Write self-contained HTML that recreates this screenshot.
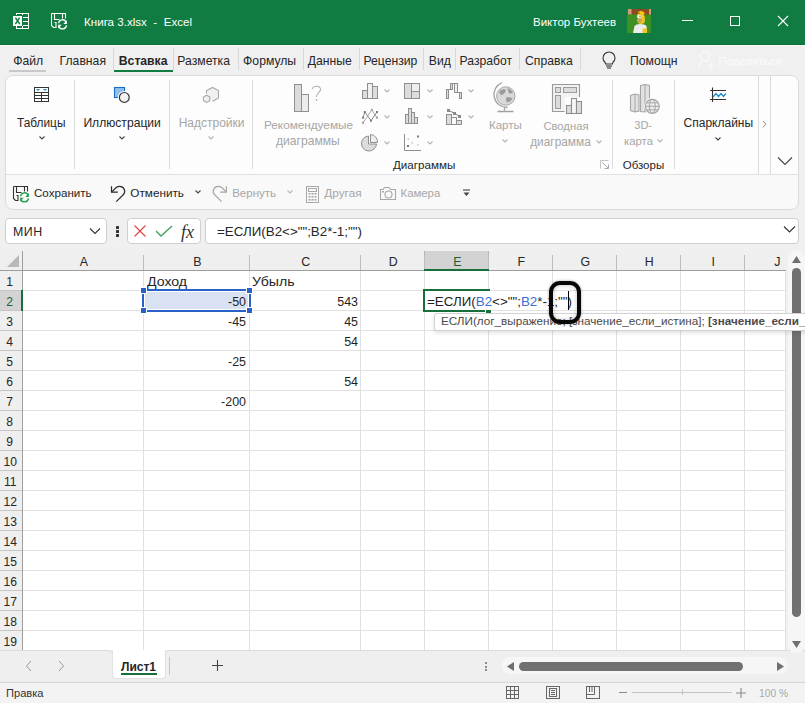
<!DOCTYPE html>
<html><head><meta charset="utf-8"><style>
html,body{margin:0;padding:0;}
body{width:805px;height:703px;overflow:hidden;position:relative;background:#f0f0f0;font-family:"Liberation Sans", sans-serif;}
.t{position:absolute;white-space:nowrap;}
.r{position:absolute;box-sizing:border-box;}
.s{position:absolute;overflow:visible;}
</style></head><body>
<div class="r" style="left:0px;top:0px;width:805px;height:44px;background:#107c41;"></div>
<svg class="s" style="left:12px;top:12px;" width="18" height="18" viewBox="0 0 18 18"><rect x="4" y="1" width="13" height="16" fill="#fff"/>
<g fill="#107c41"><rect x="5" y="2" width="5" height="2"/><rect x="11" y="2" width="5" height="3"/><rect x="11" y="6" width="5" height="3"/><rect x="11" y="10" width="5" height="3"/><rect x="11" y="14" width="5" height="2"/><rect x="5" y="14" width="5" height="2"/>
<rect x="0" y="3" width="11" height="11"/></g>
<rect x="1" y="4" width="9" height="10" fill="#fff"/>
<path d="M3.4 5.6 L7.8 12.2 M7.6 5.6 L3.4 12.2" stroke="#107c41" stroke-width="1.5"/></svg>
<svg class="s" style="left:50px;top:12px;" width="20" height="20" viewBox="0 0 20 20"><path d="M1.5 1.5 H15.5 V6.5 M1.5 1.5 V13.5 L3.5 15.5 H6.5 M4.5 1.5 V7.5 H9.5 M12.5 1.5 V6.5 M4.5 10.5 H6 V15.5" fill="none" stroke="#fff" stroke-width="1.1"/>
<path d="M8.5 11.3 A4 4 0 0 1 16.2 10.3" fill="none" stroke="#fff" stroke-width="1.3"/>
<path d="M13.3 11.9 L16.9 11.9 L16.9 8.2 Z" fill="#fff"/>
<path d="M16.5 13.4 A4 4 0 0 1 8.8 14.4" fill="none" stroke="#fff" stroke-width="1.3"/>
<path d="M11.7 12.8 L8.1 12.8 L8.1 16.6 Z" fill="#fff"/></svg>
<div class="t" style="left:84.00px;top:12px;font-size:11.6px;line-height:20px;color:#ffffff;">Книга 3.xlsx&nbsp; -&nbsp; Excel</div>
<div class="t" style="left:533.00px;top:12px;font-size:11.5px;line-height:20px;color:#ffffff;">Виктор Бухтеев</div>
<svg class="s" style="left:627px;top:9px;" width="24" height="24" viewBox="0 0 24 24"><rect width="24" height="24" fill="#3d9122"/>
<rect width="24" height="5.5" fill="#8b4c24"/>
<rect x="1" y="0" width="3.5" height="5.5" fill="#c9a079"/>
<rect x="22" y="0" width="2" height="5.5" fill="#c9a079"/>
<path d="M10.5 4 Q11 1.5 14.5 2 Q18 2.5 17.8 6 V13 Q17 15 14 15 Q11 15 10.5 13 Z" fill="#f4c614"/>
<ellipse cx="12.3" cy="7.3" rx="2.4" ry="1.6" fill="#f4f4f4"/>
<circle cx="13" cy="7.2" r="0.6" fill="#333"/>
<ellipse cx="12.8" cy="11.5" rx="2.4" ry="2.4" fill="#c9a46a"/>
<path d="M6 24 L7.5 17 Q9 15 13 15 Q18 15 19.5 17 L20 24 Z" fill="#ececec"/>
<rect x="15.6" y="19.5" width="4.3" height="4.5" fill="#f4c614"/>
<path d="M10 4.5 Q12 3 13 4.5 M17 5 Q17.5 6 17.8 7" stroke="#3a2a10" stroke-width="0.6" fill="none"/></svg>
<div class="r" style="left:682px;top:20px;width:11px;height:1px;background:#fff;"></div>
<div class="r" style="left:730px;top:16px;width:10px;height:10px;border:1px solid #fff;"></div>
<svg class="s" style="left:777px;top:15px;" width="12" height="12" viewBox="0 0 12 12"><path d="M1 1 L11 11 M11 1 L1 11" stroke="#fff" stroke-width="1.1"/></svg>
<div class="r" style="left:0px;top:44px;width:805px;height:31px;background:#f0f0f0;"></div>
<div class="r" style="left:0px;top:44px;width:805px;height:1px;background:#0c7039;"></div>
<div class="r" style="left:0px;top:45px;width:805px;height:1px;background:#f9f9f9;"></div>
<div class="t" style="left:13.20px;top:51px;font-size:12.2px;line-height:20px;color:#262626;">Файл</div>
<div class="t" style="left:59.60px;top:51px;font-size:12.2px;line-height:20px;color:#262626;">Главная</div>
<div class="t" style="left:118.80px;top:51px;font-size:12.2px;line-height:20px;color:#262626;font-weight:bold;">Вставка</div>
<div class="t" style="left:177.30px;top:51px;font-size:12.2px;line-height:20px;color:#262626;">Разметка</div>
<div class="t" style="left:243.10px;top:51px;font-size:12.2px;line-height:20px;color:#262626;">Формулы</div>
<div class="t" style="left:307.70px;top:51px;font-size:12.2px;line-height:20px;color:#262626;">Данные</div>
<div class="t" style="left:363.50px;top:51px;font-size:12.2px;line-height:20px;color:#262626;">Рецензир</div>
<div class="t" style="left:428.80px;top:51px;font-size:12.2px;line-height:20px;color:#262626;">Вид</div>
<div class="t" style="left:459.60px;top:51px;font-size:12.2px;line-height:20px;color:#262626;">Разработ</div>
<div class="t" style="left:525.00px;top:51px;font-size:12.2px;line-height:20px;color:#262626;">Справка</div>
<div class="r" style="left:113px;top:48px;width:1px;height:22px;background:#d8d8d8;"></div>
<div class="r" style="left:173px;top:48px;width:1px;height:22px;background:#d8d8d8;"></div>
<div class="r" style="left:238px;top:48px;width:1px;height:22px;background:#d8d8d8;"></div>
<div class="r" style="left:303px;top:48px;width:1px;height:22px;background:#d8d8d8;"></div>
<div class="r" style="left:359px;top:48px;width:1px;height:22px;background:#d8d8d8;"></div>
<div class="r" style="left:423px;top:48px;width:1px;height:22px;background:#d8d8d8;"></div>
<div class="r" style="left:455px;top:48px;width:1px;height:22px;background:#d8d8d8;"></div>
<div class="r" style="left:519px;top:48px;width:1px;height:22px;background:#d8d8d8;"></div>
<div class="r" style="left:580px;top:48px;width:1px;height:22px;background:#d8d8d8;"></div>
<div class="r" style="left:9px;top:70px;width:37px;height:2px;background:#c8c8c8;"></div>
<div class="r" style="left:114px;top:70px;width:59px;height:2px;background:#107c41;"></div>
<svg class="s" style="left:601px;top:51px;" width="16" height="18" viewBox="0 0 16 18"><path d="M4.2 11.5 C2.5 10 2 8.5 2 7 A6 6 0 0 1 14 7 C14 8.5 13.5 10 11.8 11.5 L11.5 13 H4.5 Z" fill="none" stroke="#333" stroke-width="1.1"/>
<line x1="5" y1="15" x2="11" y2="15" stroke="#333" stroke-width="1.1"/><line x1="6" y1="17" x2="10" y2="17" stroke="#333" stroke-width="1.1"/></svg>
<div class="t" style="left:630.00px;top:51px;font-size:12.2px;line-height:20px;color:#262626;width:48px;overflow:hidden;">Помощн</div>
<svg class="s" style="left:697px;top:50px;" width="20" height="20" viewBox="0 0 20 20"><circle cx="8" cy="6" r="4.5" fill="none" stroke="#fafafa" stroke-width="1.1"/>
<path d="M1.5 18 C2 12.5 5 11 8 11 C9.5 11 10.5 11.3 11.5 12" fill="none" stroke="#fafafa" stroke-width="1.1"/>
<path d="M14 12 V19 M10.5 15.5 H17.5" stroke="#fafafa" stroke-width="1.1"/></svg>
<div class="t" style="left:718.30px;top:51px;font-size:11.5px;line-height:20px;color:#fbfbfb;">Поделиться</div>
<div class="r" style="left:5px;top:75px;width:794px;height:135px;background:#f9f9f9;border:1px solid #dadada;border-radius:8px;"></div>
<div class="r" style="left:6px;top:76px;width:792px;height:98px;background:#fdfdfd;border-radius:7px 7px 0 0;"></div>
<div class="r" style="left:6px;top:174px;width:792px;height:1px;background:#e1e1e1;"></div>
<div class="r" style="left:74px;top:80px;width:1px;height:89px;background:#dcdcdc;"></div>
<div class="r" style="left:169px;top:80px;width:1px;height:89px;background:#dcdcdc;"></div>
<div class="r" style="left:252px;top:80px;width:1px;height:89px;background:#dcdcdc;"></div>
<div class="r" style="left:612px;top:80px;width:1px;height:89px;background:#dcdcdc;"></div>
<div class="r" style="left:674px;top:80px;width:1px;height:89px;background:#dcdcdc;"></div>
<div class="r" style="left:758px;top:76px;width:1px;height:98px;background:#dcdcdc;"></div>
<div class="r" style="left:770px;top:76px;width:1px;height:98px;background:#dcdcdc;"></div>
<svg class="s" style="left:34px;top:87px;" width="15" height="15" viewBox="0 0 15 15"><rect x="0.5" y="0.5" width="14" height="14" fill="#fff" stroke="#333"/>
<path d="M2 2 H6 L4 4 Z M9 2 H13 L11 4 Z" fill="#1e88d2"/>
<path d="M0.5 5.5 H14.5 M0.5 8.5 H14.5 M0.5 11.5 H14.5 M7.5 5.5 V14.5" stroke="#333"/></svg>
<div class="t" style="left:17.00px;top:113px;font-size:11.87px;line-height:20px;color:#262626;">Таблицы</div>
<svg class="s" style="left:38px;top:135px;" width="8" height="6" viewBox="0 0 8 6"><path d="M1.5 1.5 L4 4 L6.5 1.5" fill="none" stroke="#444" stroke-width="1.1"/></svg>
<svg class="s" style="left:113px;top:86px;" width="19" height="19" viewBox="0 0 19 19"><rect x="1.5" y="1.5" width="10" height="10" fill="#8fc0ec" stroke="#1a6fc4" stroke-width="1.1"/>
<circle cx="11.3" cy="11.4" r="6.4" fill="#fbfbfb"/>
<circle cx="11.3" cy="11.4" r="4.9" fill="#f4f4f4" stroke="#333" stroke-width="1.2"/></svg>
<div class="t" style="left:83.40px;top:113px;font-size:12.12px;line-height:20px;color:#262626;">Иллюстрации</div>
<svg class="s" style="left:118px;top:135px;" width="8" height="6" viewBox="0 0 8 6"><path d="M1.5 1.5 L4 4 L6.5 1.5" fill="none" stroke="#444" stroke-width="1.1"/></svg>
<svg class="s" style="left:198px;top:84px;" width="24" height="20" viewBox="0 0 24 20"><path d="M8.5 9.5 V6.6 L14.5 3.4 L20.5 6.6 V14 L14.5 17.2" fill="#f0f0f0" stroke="#a8a8a8" stroke-width="1.1"/>
<path d="M8.6 11.2 L11.8 13 V16.6 L8.6 18.4 L5.4 16.6 V13 Z" fill="#f0f0f0" stroke="#a8a8a8" stroke-width="1.1"/></svg>
<div class="t" style="left:178.70px;top:113px;font-size:12.0px;line-height:20px;color:#a6a6a6;">Надстройки</div>
<svg class="s" style="left:207px;top:135px;" width="8" height="6" viewBox="0 0 8 6"><path d="M1.5 1.5 L4 4 L6.5 1.5" fill="none" stroke="#b4b4b4" stroke-width="1.1"/></svg>
<svg class="s" style="left:293px;top:84px;" width="31" height="29" viewBox="0 0 31 29"><rect x="1.5" y="0.5" width="7" height="27" fill="#dcdcdc" stroke="#8f8f8f"/>
<rect x="8.5" y="10.5" width="7" height="17" fill="#ececec" stroke="#8f8f8f"/>
<path d="M19.5 5 C19.5 1.5 27.5 1 27.5 5.5 C27.5 8.5 23.5 9 23.5 12.5 L23.5 13" fill="none" stroke="#b0b0b0" stroke-width="1.1"/>
<circle cx="23.5" cy="16" r="0.9" fill="#b0b0b0"/></svg>
<div class="t" style="left:264.00px;top:115px;font-size:11.75px;line-height:20px;color:#a6a6a6;">Рекомендуемые</div>
<div class="t" style="left:276.00px;top:131px;font-size:12.12px;line-height:20px;color:#a6a6a6;">диаграммы</div>
<svg class="s" style="left:361px;top:82px;" width="18" height="17" viewBox="0 0 18 17"><rect x="1.5" y="8.5" width="5" height="8" fill="#dcdcdc" stroke="#8f8f8f"/><rect x="6.5" y="1.5" width="5" height="15" fill="#f0f0f0" stroke="#8f8f8f"/><rect x="11.5" y="4.5" width="5" height="12" fill="#dcdcdc" stroke="#8f8f8f"/></svg>
<svg class="s" style="left:403px;top:82px;" width="18" height="17" viewBox="0 0 18 17"><rect x="1.5" y="1.5" width="15" height="15" fill="#dcdcdc" stroke="#8f8f8f"/><rect x="8.5" y="1.5" width="8" height="8" fill="#eeeeee" stroke="#8f8f8f"/><path d="M8.5 9.5 V16.5" stroke="#8f8f8f"/></svg>
<svg class="s" style="left:445px;top:82px;" width="18" height="17" viewBox="0 0 18 17"><rect x="1.5" y="7.5" width="2" height="9" fill="#dcdcdc" stroke="#8f8f8f"/><rect x="5.5" y="1.5" width="2" height="6" fill="#dcdcdc" stroke="#8f8f8f"/><rect x="9.5" y="1.5" width="3" height="9" fill="#f0f0f0" stroke="#8f8f8f"/><rect x="14.5" y="10.5" width="2" height="6" fill="#dcdcdc" stroke="#8f8f8f"/><path d="M3.5 7.5 H5.5 M12.5 10.5 H14.5 M7.5 1.5 H9.5" stroke="#8f8f8f"/></svg>
<svg class="s" style="left:361px;top:108px;" width="18" height="17" viewBox="0 0 18 17"><path d="M2 14.8 L10.8 1.8 L16 9.7" fill="none" stroke="#a8a8a8" stroke-width="1"/><path d="M2 9.7 L3.8 4 L10 12.7 L16 4" fill="none" stroke="#8a8a8a" stroke-width="1"/><g fill="#7a7a7a"><rect x="1" y="8.7" width="2" height="2"/><rect x="2.8" y="3" width="2" height="2"/><rect x="9" y="11.7" width="2" height="2"/><rect x="15" y="3" width="2" height="2"/></g><g fill="#a0a0a0"><rect x="1" y="13.8" width="2" height="2"/><rect x="9.8" y="0.8" width="2" height="2"/><rect x="15" y="8.7" width="2" height="2"/></g></svg>
<svg class="s" style="left:404px;top:108px;" width="17" height="17" viewBox="0 0 17 17"><rect x="1.5" y="6.5" width="3" height="9" fill="#dcdcdc" stroke="#8f8f8f"/><rect x="4.5" y="0.5" width="3" height="15" fill="#dcdcdc" stroke="#8f8f8f"/><rect x="7.5" y="4.5" width="3" height="11" fill="#dcdcdc" stroke="#8f8f8f"/><rect x="10.5" y="9.5" width="3" height="6" fill="#dcdcdc" stroke="#8f8f8f"/></svg>
<svg class="s" style="left:445px;top:108px;" width="18" height="17" viewBox="0 0 18 17"><rect x="1.5" y="6.5" width="5" height="10" fill="#dcdcdc" stroke="#8f8f8f"/><rect x="6.5" y="9.5" width="5" height="7" fill="#f8f8f8" stroke="#8f8f8f"/><rect x="11.5" y="12.5" width="5" height="4" fill="#dcdcdc" stroke="#8f8f8f"/><path d="M3.4 2.3 L9.6 5.2 L14.3 8.4" stroke="#8f8f8f" stroke-width="1"/><g fill="#8a8a8a"><rect x="2" y="1" width="3" height="3"/><rect x="8" y="4" width="3" height="3"/><rect x="13" y="7" width="3" height="3"/></g></svg>
<svg class="s" style="left:361px;top:134px;" width="18" height="18" viewBox="0 0 18 18"><path d="M7.5 2 A7.5 7.5 0 1 0 15.5 10 H7.5 Z" fill="#dcdcdc" stroke="#8f8f8f"/><path d="M9.5 0.5 V8.5 H16.5 A7.5 7.5 0 0 0 9.5 0.5 Z" fill="#eeeeee" stroke="#8f8f8f"/></svg>
<svg class="s" style="left:404px;top:134px;" width="17" height="18" viewBox="0 0 17 18"><path d="M0.5 0 V16.5 H17" fill="none" stroke="#8f8f8f"/><g fill="#7a7a7a"><rect x="3" y="11" width="2" height="2"/><rect x="13" y="1.5" width="2" height="2"/></g><g fill="#c4c4c4"><rect x="7.5" y="8" width="1.5" height="1.5"/><rect x="3.5" y="4.5" width="1.5" height="1.5"/><rect x="13" y="10" width="1.5" height="1.5"/></g></svg>
<svg class="s" style="left:383px;top:88px;" width="8" height="6" viewBox="0 0 8 6"><path d="M1.5 1.5 L4 4 L6.5 1.5" fill="none" stroke="#b4b4b4" stroke-width="1.1"/></svg>
<svg class="s" style="left:425.5px;top:88px;" width="8" height="6" viewBox="0 0 8 6"><path d="M1.5 1.5 L4 4 L6.5 1.5" fill="none" stroke="#b4b4b4" stroke-width="1.1"/></svg>
<svg class="s" style="left:467px;top:88px;" width="8" height="6" viewBox="0 0 8 6"><path d="M1.5 1.5 L4 4 L6.5 1.5" fill="none" stroke="#b4b4b4" stroke-width="1.1"/></svg>
<svg class="s" style="left:383px;top:114px;" width="8" height="6" viewBox="0 0 8 6"><path d="M1.5 1.5 L4 4 L6.5 1.5" fill="none" stroke="#b4b4b4" stroke-width="1.1"/></svg>
<svg class="s" style="left:425.5px;top:114px;" width="8" height="6" viewBox="0 0 8 6"><path d="M1.5 1.5 L4 4 L6.5 1.5" fill="none" stroke="#b4b4b4" stroke-width="1.1"/></svg>
<svg class="s" style="left:467px;top:114px;" width="8" height="6" viewBox="0 0 8 6"><path d="M1.5 1.5 L4 4 L6.5 1.5" fill="none" stroke="#b4b4b4" stroke-width="1.1"/></svg>
<svg class="s" style="left:383px;top:140px;" width="8" height="6" viewBox="0 0 8 6"><path d="M1.5 1.5 L4 4 L6.5 1.5" fill="none" stroke="#b4b4b4" stroke-width="1.1"/></svg>
<svg class="s" style="left:425.5px;top:140px;" width="8" height="6" viewBox="0 0 8 6"><path d="M1.5 1.5 L4 4 L6.5 1.5" fill="none" stroke="#b4b4b4" stroke-width="1.1"/></svg>
<div class="t" style="left:393.00px;top:155px;font-size:11.62px;line-height:20px;color:#262626;">Диаграммы</div>
<svg class="s" style="left:489px;top:81px;" width="30" height="32" viewBox="0 0 30 32"><path d="M13 1.5 A13 13 0 0 0 18.5 26.5" fill="none" stroke="#a0a0a0" stroke-width="1.3"/>
<circle cx="16.8" cy="15" r="9.2" fill="#d9d9d9" stroke="#a8a8a8"/>
<path d="M10.5 10 Q14 7 17 9 Q16 13 12.5 14 Q9.5 12.5 10.5 10 Z M17 16.5 Q21 15.5 23.5 17.5 Q21 22 17.5 21 Z M18.5 7 Q22.5 8 24 12 L20 12.5 Z" fill="#9a9a9a"/>
<path d="M15.5 26.5 V29.5 M8.5 30.5 H24.5" stroke="#a0a0a0" stroke-width="1.3"/></svg>
<div class="t" style="left:489.00px;top:115px;font-size:11.5px;line-height:20px;color:#a6a6a6;">Карты</div>
<svg class="s" style="left:501px;top:137.5px;" width="8" height="6" viewBox="0 0 8 6"><path d="M1.5 1.5 L4 4 L6.5 1.5" fill="none" stroke="#b4b4b4" stroke-width="1.1"/></svg>
<svg class="s" style="left:551px;top:83px;" width="32" height="32" viewBox="0 0 32 32"><rect x="1.5" y="1.5" width="27" height="27" fill="#f2f2f2"/>
<path d="M13.5 28.5 H1.5 V1.5 H28.5 V16.5" fill="none" stroke="#999" stroke-width="1.1"/>
<rect x="4.5" y="4.5" width="5" height="5" fill="#dcdcdc" stroke="#9c9c9c"/>
<rect x="12.5" y="4.5" width="13" height="5" fill="#dcdcdc" stroke="#9c9c9c"/>
<rect x="4.5" y="12.5" width="5" height="13" fill="#dcdcdc" stroke="#9c9c9c"/>
<rect x="14" y="14" width="18" height="18" fill="#fdfdfd"/>
<rect x="15.5" y="22.5" width="5" height="8" fill="#dcdcdc" stroke="#8f8f8f" stroke-width="1.1"/>
<rect x="20.5" y="15.5" width="5" height="15" fill="#f6f6f6" stroke="#8f8f8f" stroke-width="1.1"/>
<rect x="25.5" y="18.5" width="5" height="12" fill="#dcdcdc" stroke="#8f8f8f" stroke-width="1.1"/></svg>
<div class="t" style="left:543.40px;top:116px;font-size:11.25px;line-height:20px;color:#a6a6a6;">Сводная</div>
<div class="t" style="left:530.20px;top:132px;font-size:11.87px;line-height:20px;color:#a6a6a6;">диаграмма</div>
<svg class="s" style="left:594.5px;top:138.5px;" width="8" height="6" viewBox="0 0 8 6"><path d="M1.5 1.5 L4 4 L6.5 1.5" fill="none" stroke="#b4b4b4" stroke-width="1.1"/></svg>
<svg class="s" style="left:600px;top:160px;" width="10" height="10" viewBox="0 0 10 10"><path d="M0.5 8.5 V0.5 H8.5" fill="none" stroke="#c4c4c4"/><path d="M2.5 2.5 L8 8 M8.5 4.5 V8.5 H4.5" fill="none" stroke="#a8a8a8"/></svg>
<svg class="s" style="left:629px;top:83px;" width="32" height="32" viewBox="0 0 32 32"><path d="M1.5 12.5 L6 11 L10 12 V28 L6 29 L1.5 27.5 Z" fill="#e2e2e2" stroke="#a6a6a6" stroke-width="1.1"/>
<path d="M11.5 2.5 L16 1.5 L20.5 2.5 V22 L16 29 L11.5 28.5 Z" fill="#e2e2e2" stroke="#a6a6a6" stroke-width="1.1"/>
<path d="M16 1.5 V29 M6 11 V29" stroke="#a6a6a6"/>
<circle cx="23.3" cy="23.3" r="8.2" fill="#fdfdfd"/>
<circle cx="23.3" cy="23.3" r="7" fill="#ececec" stroke="#a6a6a6" stroke-width="1.2"/>
<ellipse cx="23.3" cy="23.3" rx="3" ry="7" fill="none" stroke="#a6a6a6"/>
<path d="M16.3 23.3 H30.3 M17.2 19.8 H29.4 M17.2 26.8 H29.4" stroke="#a6a6a6"/></svg>
<div class="t" style="left:634.30px;top:115px;font-size:11.0px;line-height:20px;color:#a6a6a6;">3D-</div>
<div class="t" style="left:624.00px;top:131px;font-size:11.37px;line-height:20px;color:#a6a6a6;">карта</div>
<svg class="s" style="left:656px;top:137.5px;" width="8" height="6" viewBox="0 0 8 6"><path d="M1.5 1.5 L4 4 L6.5 1.5" fill="none" stroke="#b4b4b4" stroke-width="1.1"/></svg>
<div class="t" style="left:622.70px;top:155px;font-size:11.5px;line-height:20px;color:#262626;">Обзоры</div>
<svg class="s" style="left:708px;top:87px;" width="20" height="16" viewBox="0 0 20 16"><path d="M4.5 0.5 V15 M2 3.5 H18 M2 12.5 H18" stroke="#333" stroke-width="1.1"/>
<path d="M5 10 L8 6.5 L10.5 9.5 L13 6.5 L15.5 9.5 L18 6.5" fill="none" stroke="#1e88d2" stroke-width="1.2"/></svg>
<div class="t" style="left:683.60px;top:113px;font-size:12.0px;line-height:20px;color:#262626;">Спарклайны</div>
<svg class="s" style="left:714px;top:135.5px;" width="8" height="6" viewBox="0 0 8 6"><path d="M1.5 1.5 L4 4 L6.5 1.5" fill="none" stroke="#444" stroke-width="1.1"/></svg>
<svg class="s" style="left:762px;top:120px;" width="6" height="9" viewBox="0 0 6 9"><path d="M1 1 L4 4.2 L1 7.4" fill="none" stroke="#8a8a8a" stroke-width="1"/></svg>
<svg class="s" style="left:777px;top:156px;" width="16" height="10" viewBox="0 0 16 10"><path d="M1 1.5 L8 8.5 L15 1.5" fill="none" stroke="#444" stroke-width="1.1"/></svg>
<svg class="s" style="left:12px;top:185px;" width="20" height="20" viewBox="0 0 20 20"><path d="M1.5 1.5 H15.5 V6.5 M1.5 1.5 V13.5 L3.5 15.5 H6.5 M4.5 1.5 V7.5 H9.5 M12.5 1.5 V6.5 M4.5 10.5 H6 V15.5" fill="none" stroke="#333" stroke-width="1.1"/>
<path d="M8.5 11.3 A4 4 0 0 1 16.2 10.3" fill="none" stroke="#1e9e4a" stroke-width="1.3"/>
<path d="M13.3 11.9 L16.9 11.9 L16.9 8.2 Z" fill="#1e9e4a"/>
<path d="M16.5 13.4 A4 4 0 0 1 8.8 14.4" fill="none" stroke="#1e9e4a" stroke-width="1.3"/>
<path d="M11.7 12.8 L8.1 12.8 L8.1 16.6 Z" fill="#1e9e4a"/></svg>
<div class="t" style="left:34.00px;top:183px;font-size:11.6px;line-height:20px;color:#262626;">Сохранить</div>
<svg class="s" style="left:106px;top:182px;" width="24" height="24" viewBox="0 0 24 24"><path d="M5.5 4.3 V10.2 H11.8" fill="none" stroke="#2a2a2a" stroke-width="1.2"/><path d="M5.5 10.2 L10.2 5.5 Q12 4.3 13.7 4.3 A5 5 0 0 1 17.5 12.5 L10.2 19.6" fill="none" stroke="#2a2a2a" stroke-width="1.2"/></svg>
<div class="t" style="left:130.30px;top:183px;font-size:11.75px;line-height:20px;color:#262626;">Отменить</div>
<svg class="s" style="left:194px;top:189px;" width="8" height="6" viewBox="0 0 8 6"><path d="M1.5 1.5 L4 4 L6.5 1.5" fill="none" stroke="#444" stroke-width="1.1"/></svg>
<svg class="s" style="left:208px;top:182px;" width="24" height="24" viewBox="0 0 24 24"><path d="M18.4 4.3 V10.2 H12.1" fill="none" stroke="#a6a6a6" stroke-width="1.2"/><path d="M18.4 10.2 L13.7 5.5 Q12 4.3 10.2 4.3 A5 5 0 0 0 6.4 12.5 L13.7 19.6" fill="none" stroke="#a6a6a6" stroke-width="1.2"/></svg>
<div class="t" style="left:232.20px;top:183px;font-size:11.5px;line-height:20px;color:#a6a6a6;">Вернуть</div>
<svg class="s" style="left:286px;top:189px;" width="8" height="6" viewBox="0 0 8 6"><path d="M1.5 1.5 L4 4 L6.5 1.5" fill="none" stroke="#b8b8b8" stroke-width="1.1"/></svg>
<svg class="s" style="left:306px;top:186px;" width="13" height="17" viewBox="0 0 13 17"><rect x="0.5" y="0.5" width="12" height="16" fill="none" stroke="#a8a8a8"/><rect x="2.5" y="2.5" width="8" height="3" fill="none" stroke="#a8a8a8"/>
<g fill="#a8a8a8"><rect x="2.5" y="7" width="2" height="1.6"/><rect x="5.5" y="7" width="2" height="1.6"/><rect x="8.5" y="7" width="2" height="1.6"/><rect x="2.5" y="10" width="2" height="1.6"/><rect x="5.5" y="10" width="2" height="1.6"/><rect x="8.5" y="10" width="2" height="1.6"/><rect x="2.5" y="13" width="2" height="1.6"/><rect x="5.5" y="13" width="2" height="1.6"/><rect x="8.5" y="13" width="2" height="1.6"/></g></svg>
<div class="t" style="left:324.30px;top:183px;font-size:11.8px;line-height:20px;color:#a6a6a6;">Другая</div>
<svg class="s" style="left:380px;top:186px;" width="17" height="15" viewBox="0 0 17 15"><path d="M0.5 3.5 H3 L4.5 1.5 H9 L10.5 3.5 H15.5 V13.5 H0.5 Z" fill="none" stroke="#a8a8a8" stroke-width="1.1"/>
<circle cx="8.5" cy="8.5" r="3.5" fill="none" stroke="#a8a8a8" stroke-width="1.1"/><rect x="2" y="5" width="2" height="1.5" fill="#a8a8a8"/></svg>
<div class="t" style="left:400.60px;top:183px;font-size:11.34px;line-height:20px;color:#a6a6a6;">Камера</div>
<svg class="s" style="left:462px;top:189px;" width="9" height="8" viewBox="0 0 9 8"><path d="M1 1 H8" stroke="#444" stroke-width="1.1"/><path d="M1.5 3.5 H7.5 L4.5 7 Z" fill="#444"/></svg>
<div class="r" style="left:5px;top:218px;width:102px;height:26px;background:#fff;border:1px solid #d0d0d0;border-radius:4px;"></div>
<div class="t" style="left:13.00px;top:222px;font-size:12.4px;line-height:20px;color:#262626;letter-spacing:0.5px;">МИН</div>
<svg class="s" style="left:89px;top:227px;" width="12" height="8" viewBox="0 0 12 8"><path d="M1 1.5 L6 6.5 L11 1.5" fill="none" stroke="#333" stroke-width="1.1"/></svg>
<div class="r" style="left:116px;top:226px;width:2.6px;height:2.6px;background:#333;border-radius:0.5px;"></div>
<div class="r" style="left:116px;top:230.2px;width:2.6px;height:2.6px;background:#333;border-radius:0.5px;"></div>
<div class="r" style="left:116px;top:234.4px;width:2.6px;height:2.6px;background:#333;border-radius:0.5px;"></div>
<div class="r" style="left:127px;top:218px;width:74px;height:26px;background:#fff;border:1px solid #d0d0d0;border-radius:4px;"></div>
<svg class="s" style="left:133px;top:224px;" width="14" height="14" viewBox="0 0 14 14"><path d="M1.5 1.5 L12.5 12.5 M12.5 1.5 L1.5 12.5" stroke="#e04a4a" stroke-width="1.3"/></svg>
<svg class="s" style="left:155px;top:225px;" width="18" height="12" viewBox="0 0 18 12"><path d="M1 6 L6 11 L17 1" fill="none" stroke="#3aa05a" stroke-width="1.3"/></svg>
<div class="t" style="left:181.00px;top:222px;font-size:18px;line-height:20px;color:#333;font-family:'Liberation Serif',serif;"><i>fx</i></div>
<div class="r" style="left:205px;top:218px;width:594px;height:26px;background:#fff;border:1px solid #d0d0d0;border-radius:4px;"></div>
<div class="t" style="left:217.00px;top:222px;font-size:13.37px;line-height:20px;color:#262626;">=ЕСЛИ(B2&lt;&gt;"";B2*-1;"")</div>
<svg class="s" style="left:783px;top:225px;" width="13" height="9" viewBox="0 0 13 9"><path d="M1 1.5 L6.5 7 L12 1.5" fill="none" stroke="#333" stroke-width="1.1"/></svg>
<div class="r" style="left:0px;top:251px;width:786px;height:20px;background:#efefef;"></div>
<div class="r" style="left:0px;top:271px;width:23px;height:380px;background:#efefef;"></div>
<div class="r" style="left:23px;top:271px;width:763px;height:379px;background:#fff;"></div>
<div class="r" style="left:424px;top:251px;width:65px;height:19px;background:#d3d3d3;border-left:1px solid #b4b4b4;border-right:1px solid #b4b4b4;"></div>
<div class="r" style="left:0px;top:291px;width:21px;height:19px;background:#d3d3d3;"></div>
<div class="r" style="left:143px;top:255px;width:1px;height:15px;background:#bdbdbd;"></div>
<div class="r" style="left:249px;top:255px;width:1px;height:15px;background:#bdbdbd;"></div>
<div class="r" style="left:360px;top:255px;width:1px;height:15px;background:#bdbdbd;"></div>
<div class="r" style="left:424px;top:255px;width:1px;height:15px;background:#bdbdbd;"></div>
<div class="r" style="left:488px;top:255px;width:1px;height:15px;background:#bdbdbd;"></div>
<div class="r" style="left:552px;top:255px;width:1px;height:15px;background:#bdbdbd;"></div>
<div class="r" style="left:616px;top:255px;width:1px;height:15px;background:#bdbdbd;"></div>
<div class="r" style="left:680px;top:255px;width:1px;height:15px;background:#bdbdbd;"></div>
<div class="r" style="left:744px;top:255px;width:1px;height:15px;background:#bdbdbd;"></div>
<svg class="s" style="left:7px;top:255px;" width="13" height="13" viewBox="0 0 13 13"><path d="M12 0 V12 H0 Z" fill="#b8b8b8"/></svg>
<div class="r" style="left:0px;top:270px;width:786px;height:1px;background:#9e9e9e;"></div>
<div class="r" style="left:22px;top:251px;width:1px;height:399px;background:#9e9e9e;"></div>
<div class="r" style="left:143px;top:271px;width:1px;height:379px;background:#e1e1e1;"></div>
<div class="r" style="left:249px;top:271px;width:1px;height:379px;background:#e1e1e1;"></div>
<div class="r" style="left:360px;top:271px;width:1px;height:379px;background:#e1e1e1;"></div>
<div class="r" style="left:424px;top:271px;width:1px;height:379px;background:#e1e1e1;"></div>
<div class="r" style="left:488px;top:271px;width:1px;height:379px;background:#e1e1e1;"></div>
<div class="r" style="left:552px;top:271px;width:1px;height:379px;background:#e1e1e1;"></div>
<div class="r" style="left:616px;top:271px;width:1px;height:379px;background:#e1e1e1;"></div>
<div class="r" style="left:680px;top:271px;width:1px;height:379px;background:#e1e1e1;"></div>
<div class="r" style="left:744px;top:271px;width:1px;height:379px;background:#e1e1e1;"></div>
<div class="r" style="left:785px;top:271px;width:1px;height:379px;background:#e1e1e1;"></div>
<div class="r" style="left:0px;top:290px;width:22px;height:1px;background:#c6c6c6;"></div>
<div class="r" style="left:23px;top:290px;width:762px;height:1px;background:#e1e1e1;"></div>
<div class="r" style="left:0px;top:310px;width:22px;height:1px;background:#c6c6c6;"></div>
<div class="r" style="left:23px;top:310px;width:762px;height:1px;background:#e1e1e1;"></div>
<div class="r" style="left:0px;top:330px;width:22px;height:1px;background:#c6c6c6;"></div>
<div class="r" style="left:23px;top:330px;width:762px;height:1px;background:#e1e1e1;"></div>
<div class="r" style="left:0px;top:350px;width:22px;height:1px;background:#c6c6c6;"></div>
<div class="r" style="left:23px;top:350px;width:762px;height:1px;background:#e1e1e1;"></div>
<div class="r" style="left:0px;top:370px;width:22px;height:1px;background:#c6c6c6;"></div>
<div class="r" style="left:23px;top:370px;width:762px;height:1px;background:#e1e1e1;"></div>
<div class="r" style="left:0px;top:390px;width:22px;height:1px;background:#c6c6c6;"></div>
<div class="r" style="left:23px;top:390px;width:762px;height:1px;background:#e1e1e1;"></div>
<div class="r" style="left:0px;top:410px;width:22px;height:1px;background:#c6c6c6;"></div>
<div class="r" style="left:23px;top:410px;width:762px;height:1px;background:#e1e1e1;"></div>
<div class="r" style="left:0px;top:430px;width:22px;height:1px;background:#c6c6c6;"></div>
<div class="r" style="left:23px;top:430px;width:762px;height:1px;background:#e1e1e1;"></div>
<div class="r" style="left:0px;top:450px;width:22px;height:1px;background:#c6c6c6;"></div>
<div class="r" style="left:23px;top:450px;width:762px;height:1px;background:#e1e1e1;"></div>
<div class="r" style="left:0px;top:470px;width:22px;height:1px;background:#c6c6c6;"></div>
<div class="r" style="left:23px;top:470px;width:762px;height:1px;background:#e1e1e1;"></div>
<div class="r" style="left:0px;top:490px;width:22px;height:1px;background:#c6c6c6;"></div>
<div class="r" style="left:23px;top:490px;width:762px;height:1px;background:#e1e1e1;"></div>
<div class="r" style="left:0px;top:510px;width:22px;height:1px;background:#c6c6c6;"></div>
<div class="r" style="left:23px;top:510px;width:762px;height:1px;background:#e1e1e1;"></div>
<div class="r" style="left:0px;top:530px;width:22px;height:1px;background:#c6c6c6;"></div>
<div class="r" style="left:23px;top:530px;width:762px;height:1px;background:#e1e1e1;"></div>
<div class="r" style="left:0px;top:550px;width:22px;height:1px;background:#c6c6c6;"></div>
<div class="r" style="left:23px;top:550px;width:762px;height:1px;background:#e1e1e1;"></div>
<div class="r" style="left:0px;top:570px;width:22px;height:1px;background:#c6c6c6;"></div>
<div class="r" style="left:23px;top:570px;width:762px;height:1px;background:#e1e1e1;"></div>
<div class="r" style="left:0px;top:590px;width:22px;height:1px;background:#c6c6c6;"></div>
<div class="r" style="left:23px;top:590px;width:762px;height:1px;background:#e1e1e1;"></div>
<div class="r" style="left:0px;top:610px;width:22px;height:1px;background:#c6c6c6;"></div>
<div class="r" style="left:23px;top:610px;width:762px;height:1px;background:#e1e1e1;"></div>
<div class="r" style="left:0px;top:630px;width:22px;height:1px;background:#c6c6c6;"></div>
<div class="r" style="left:23px;top:630px;width:762px;height:1px;background:#e1e1e1;"></div>
<div class="r" style="left:0px;top:650px;width:22px;height:1px;background:#c6c6c6;"></div>
<div class="r" style="left:23px;top:650px;width:762px;height:1px;background:#e1e1e1;"></div>
<div class="r" style="left:424px;top:269px;width:65px;height:2px;background:#17703c;"></div>
<div class="r" style="left:21px;top:290px;width:2px;height:21px;background:#17703c;"></div>
<div class="t" style="left:-116.20px;width:400px;text-align:center;top:252px;font-size:12.4px;line-height:20px;color:#262626;">A</div>
<div class="t" style="left:-2.70px;width:400px;text-align:center;top:252px;font-size:12.4px;line-height:20px;color:#262626;">B</div>
<div class="t" style="left:105.80px;width:400px;text-align:center;top:252px;font-size:12.4px;line-height:20px;color:#262626;">C</div>
<div class="t" style="left:193.30px;width:400px;text-align:center;top:252px;font-size:12.4px;line-height:20px;color:#262626;">D</div>
<div class="t" style="left:257.30px;width:400px;text-align:center;top:252px;font-size:12.4px;line-height:20px;color:#1e5e36;">E</div>
<div class="t" style="left:321.30px;width:400px;text-align:center;top:252px;font-size:12.4px;line-height:20px;color:#262626;">F</div>
<div class="t" style="left:385.30px;width:400px;text-align:center;top:252px;font-size:12.4px;line-height:20px;color:#262626;">G</div>
<div class="t" style="left:449.30px;width:400px;text-align:center;top:252px;font-size:12.4px;line-height:20px;color:#262626;">H</div>
<div class="t" style="left:513.30px;width:400px;text-align:center;top:252px;font-size:12.4px;line-height:20px;color:#262626;">I</div>
<div class="t" style="left:577.30px;width:400px;text-align:center;top:252px;font-size:12.4px;line-height:20px;color:#262626;">J</div>
<div class="t" style="left:-190.50px;width:400px;text-align:center;top:272px;font-size:12.1px;line-height:20px;color:#262626;">1</div>
<div class="t" style="left:-190.50px;width:400px;text-align:center;top:292px;font-size:12.1px;line-height:20px;color:#1e5e36;">2</div>
<div class="t" style="left:-190.50px;width:400px;text-align:center;top:312px;font-size:12.1px;line-height:20px;color:#262626;">3</div>
<div class="t" style="left:-190.50px;width:400px;text-align:center;top:332px;font-size:12.1px;line-height:20px;color:#262626;">4</div>
<div class="t" style="left:-190.50px;width:400px;text-align:center;top:352px;font-size:12.1px;line-height:20px;color:#262626;">5</div>
<div class="t" style="left:-190.50px;width:400px;text-align:center;top:372px;font-size:12.1px;line-height:20px;color:#262626;">6</div>
<div class="t" style="left:-190.50px;width:400px;text-align:center;top:392px;font-size:12.1px;line-height:20px;color:#262626;">7</div>
<div class="t" style="left:-190.50px;width:400px;text-align:center;top:412px;font-size:12.1px;line-height:20px;color:#262626;">8</div>
<div class="t" style="left:-190.50px;width:400px;text-align:center;top:432px;font-size:12.1px;line-height:20px;color:#262626;">9</div>
<div class="t" style="left:-189.70px;width:400px;text-align:center;top:452px;font-size:12.1px;line-height:20px;color:#262626;">10</div>
<div class="t" style="left:-189.70px;width:400px;text-align:center;top:472px;font-size:12.1px;line-height:20px;color:#262626;">11</div>
<div class="t" style="left:-189.70px;width:400px;text-align:center;top:492px;font-size:12.1px;line-height:20px;color:#262626;">12</div>
<div class="t" style="left:-189.70px;width:400px;text-align:center;top:512px;font-size:12.1px;line-height:20px;color:#262626;">13</div>
<div class="t" style="left:-189.70px;width:400px;text-align:center;top:532px;font-size:12.1px;line-height:20px;color:#262626;">14</div>
<div class="t" style="left:-189.70px;width:400px;text-align:center;top:552px;font-size:12.1px;line-height:20px;color:#262626;">15</div>
<div class="t" style="left:-189.70px;width:400px;text-align:center;top:572px;font-size:12.1px;line-height:20px;color:#262626;">16</div>
<div class="t" style="left:-189.70px;width:400px;text-align:center;top:592px;font-size:12.1px;line-height:20px;color:#262626;">17</div>
<div class="t" style="left:-189.70px;width:400px;text-align:center;top:612px;font-size:12.1px;line-height:20px;color:#262626;">18</div>
<div class="t" style="left:-189.70px;width:400px;text-align:center;top:632px;font-size:12.1px;line-height:20px;color:#262626;">19</div>
<div class="t" style="left:146.50px;top:272px;font-size:12.4px;line-height:20px;color:#1f1f1f;transform:scaleX(1.14);transform-origin:0 0;">Доход</div>
<div class="t" style="left:252.40px;top:272px;font-size:12.4px;line-height:20px;color:#1f1f1f;transform:scaleX(1.14);transform-origin:0 0;">Убыль</div>
<div class="r" style="left:145px;top:292px;width:103px;height:17px;background:#d9e2f3;"></div>
<div class="r" style="left:147px;top:289px;width:100px;height:2px;background:#2862c8;"></div>
<div class="r" style="left:147px;top:310px;width:99px;height:2px;background:#2862c8;"></div>
<div class="r" style="left:142px;top:294px;width:2px;height:14px;background:#2862c8;"></div>
<div class="r" style="left:249px;top:294px;width:2px;height:13px;background:#2862c8;"></div>
<div class="r" style="left:141px;top:288px;width:5px;height:5px;background:#2862c8;box-shadow:0 0 0 1px #fff;"></div>
<div class="r" style="left:247px;top:288px;width:5px;height:5px;background:#2862c8;box-shadow:0 0 0 1px #fff;"></div>
<div class="r" style="left:141px;top:308px;width:5px;height:5px;background:#2862c8;box-shadow:0 0 0 1px #fff;"></div>
<div class="r" style="left:247px;top:308px;width:5px;height:5px;background:#2862c8;box-shadow:0 0 0 1px #fff;"></div>
<div class="t" style="right:559.00px;top:292px;font-size:12.45px;line-height:20px;color:#1f1f1f;">-50</div>
<div class="t" style="right:559.00px;top:312px;font-size:12.45px;line-height:20px;color:#1f1f1f;">-45</div>
<div class="t" style="right:559.00px;top:352px;font-size:12.45px;line-height:20px;color:#1f1f1f;">-25</div>
<div class="t" style="right:559.00px;top:392px;font-size:12.45px;line-height:20px;color:#1f1f1f;">-200</div>
<div class="t" style="right:447.00px;top:292px;font-size:12.45px;line-height:20px;color:#1f1f1f;">543</div>
<div class="t" style="right:447.00px;top:312px;font-size:12.45px;line-height:20px;color:#1f1f1f;">45</div>
<div class="t" style="right:447.00px;top:332px;font-size:12.45px;line-height:20px;color:#1f1f1f;">54</div>
<div class="t" style="right:447.00px;top:372px;font-size:12.45px;line-height:20px;color:#1f1f1f;">54</div>
<div class="r" style="left:425px;top:291px;width:150px;height:19px;background:#fff;"></div>
<div class="r" style="left:423px;top:289px;width:67px;height:2px;background:#17703c;"></div>
<div class="r" style="left:423px;top:289px;width:2px;height:23px;background:#17703c;"></div>
<div class="r" style="left:423px;top:310px;width:62px;height:2px;background:#17703c;"></div>
<div class="r" style="left:486px;top:310px;width:5px;height:3px;background:#17703c;box-shadow:0 0 0 1px #fff;"></div>
<div class="t" style="left:427.00px;top:292px;font-size:13.37px;line-height:20px;color:#1f1f1f;">=ЕСЛИ(<span style="color:#3a6fd6">B2</span>&lt;&gt;"";<span style="color:#3a6fd6">B2</span>*-1;"")</div>
<div class="r" style="left:568px;top:291px;width:1px;height:19px;background:#000;"></div>
<div class="r" style="left:100px;top:650px;width:80px;height:10px;background:#fff;"></div>
<div class="r" style="left:0px;top:650px;width:113px;height:33px;background:#efefef;border-top:1px solid #dcdcdc;border-right:1px solid #dcdcdc;border-top-right-radius:4px;"></div>
<div class="r" style="left:165px;top:650px;width:640px;height:33px;background:#efefef;border-top:1px solid #dcdcdc;border-left:1px solid #dcdcdc;border-top-left-radius:4px;"></div>
<div class="r" style="left:0px;top:678px;width:805px;height:5px;background:#efefef;"></div>
<div class="r" style="left:788px;top:251px;width:17px;height:402px;background:#f6f6f6;border-radius:8px;"></div>
<svg class="s" style="left:792px;top:256px;" width="9" height="7" viewBox="0 0 9 7"><path d="M4.5 0 L9 7 H0 Z" fill="#6f6f6f"/></svg>
<div class="r" style="left:792px;top:268px;width:9px;height:349px;background:#707070;border-radius:4.5px;"></div>
<svg class="s" style="left:792px;top:641px;" width="9" height="7" viewBox="0 0 9 7"><path d="M0 0 H9 L4.5 7 Z" fill="#6f6f6f"/></svg>
<svg class="s" style="left:25px;top:660px;" width="8" height="12" viewBox="0 0 8 12"><path d="M6 1 L1.5 6 L6 11" fill="none" stroke="#9a9a9a" stroke-width="1"/></svg>
<svg class="s" style="left:57px;top:660px;" width="8" height="12" viewBox="0 0 8 12"><path d="M2 1 L6.5 6 L2 11" fill="none" stroke="#9a9a9a" stroke-width="1"/></svg>
<div class="r" style="left:112px;top:650px;width:54px;height:29px;background:#fff;border-radius:0 0 4px 4px;border:1px solid #e2e2e2;border-top:none;"></div>
<div class="t" style="left:121.00px;top:657px;font-size:12.0px;line-height:20px;color:#262626;font-weight:bold;">Лист1</div>
<div class="r" style="left:121px;top:673px;width:36px;height:2px;background:#17703c;"></div>
<div class="r" style="left:169px;top:657px;width:1px;height:18px;background:#c8c8c8;"></div>
<svg class="s" style="left:211px;top:659px;" width="13" height="13" viewBox="0 0 13 13"><path d="M6.5 1 V12 M1 6.5 H12" stroke="#444" stroke-width="1.1"/></svg>
<div class="r" style="left:485px;top:662px;width:2px;height:2px;background:#8a8a8a;"></div>
<div class="r" style="left:485px;top:666px;width:2px;height:2px;background:#8a8a8a;"></div>
<div class="r" style="left:485px;top:669px;width:2px;height:2px;background:#8a8a8a;"></div>
<div class="r" style="left:502px;top:657px;width:286px;height:17px;background:#f6f6f6;border-radius:8px;"></div>
<svg class="s" style="left:507px;top:662px;" width="8" height="9" viewBox="0 0 8 9"><path d="M0 4.5 L7 0 V9 Z" fill="#6f6f6f"/></svg>
<div class="r" style="left:519px;top:662px;width:224px;height:9px;background:#707070;border-radius:4.5px;"></div>
<svg class="s" style="left:776px;top:662px;" width="8" height="9" viewBox="0 0 8 9"><path d="M8 4.5 L1 0 V9 Z" fill="#6f6f6f"/></svg>
<div class="r" style="left:0px;top:682px;width:805px;height:21px;background:#f3f3f3;"></div>
<div class="r" style="left:0px;top:682px;width:805px;height:1px;background:#d6d6d6;"></div>
<div class="t" style="left:6.00px;top:683px;font-size:11.1px;line-height:20px;color:#333;">Правка</div>
<svg class="s" style="left:506px;top:686px;" width="13" height="13" viewBox="0 0 13 13"><rect x="0.5" y="0.5" width="12" height="12" fill="none" stroke="#666"/><path d="M4.5 0.5 V12.5 M8.5 0.5 V12.5 M0.5 4.5 H12.5 M0.5 8.5 H12.5" stroke="#666"/></svg>
<svg class="s" style="left:546px;top:686px;" width="14" height="13" viewBox="0 0 14 13"><rect x="0.5" y="0.5" width="13" height="12" fill="none" stroke="#666"/><rect x="3.5" y="2.5" width="7" height="8" fill="none" stroke="#666"/><path d="M5 4.5 H9 M5 6.5 H9 M5 8.5 H9" stroke="#666"/></svg>
<svg class="s" style="left:586px;top:686px;" width="14" height="13" viewBox="0 0 14 13"><rect x="0.5" y="0.5" width="13" height="12" fill="none" stroke="#666"/><path d="M0.5 8.5 H8.5 V0.5 M3.5 0.5 V6 M6 0.5 V6" fill="none" stroke="#666"/></svg>
<div class="r" style="left:619px;top:692px;width:8px;height:1px;background:#8a8a8a;"></div>
<div class="r" style="left:632px;top:692px;width:100px;height:1px;background:#c4c4c4;"></div>
<div class="r" style="left:682px;top:689px;width:1px;height:6px;background:#c4c4c4;"></div>
<svg class="s" style="left:736px;top:688px;" width="10" height="10" viewBox="0 0 10 10"><path d="M5 0 V10 M0 5 H10" stroke="#8a8a8a" stroke-width="1.1"/></svg>
<div class="t" style="left:759.00px;top:684px;font-size:10.25px;line-height:20px;color:#a8a8a8;">100 %</div>
<div class="r" style="left:434px;top:313px;width:380px;height:18px;background:#fff;border:1px solid #d2d2d2;border-radius:3px;box-shadow:0 2px 4px rgba(0,0,0,0.12);"></div>
<div class="t" style="left:441.00px;top:311px;font-size:11.7px;line-height:20px;color:#4a4a4a;">ЕСЛИ(лог_выражение; [значение_если_истина]; <b>[значение_если_ложь])</b></div>
<div class="r" style="left:548.5px;top:281px;width:32px;height:43px;border:4.5px solid #080808;border-radius:11px;box-shadow:0 0 3px rgba(0,0,0,0.35), inset 0 0 4px rgba(0,0,0,0.25);"></div>
</body></html>
